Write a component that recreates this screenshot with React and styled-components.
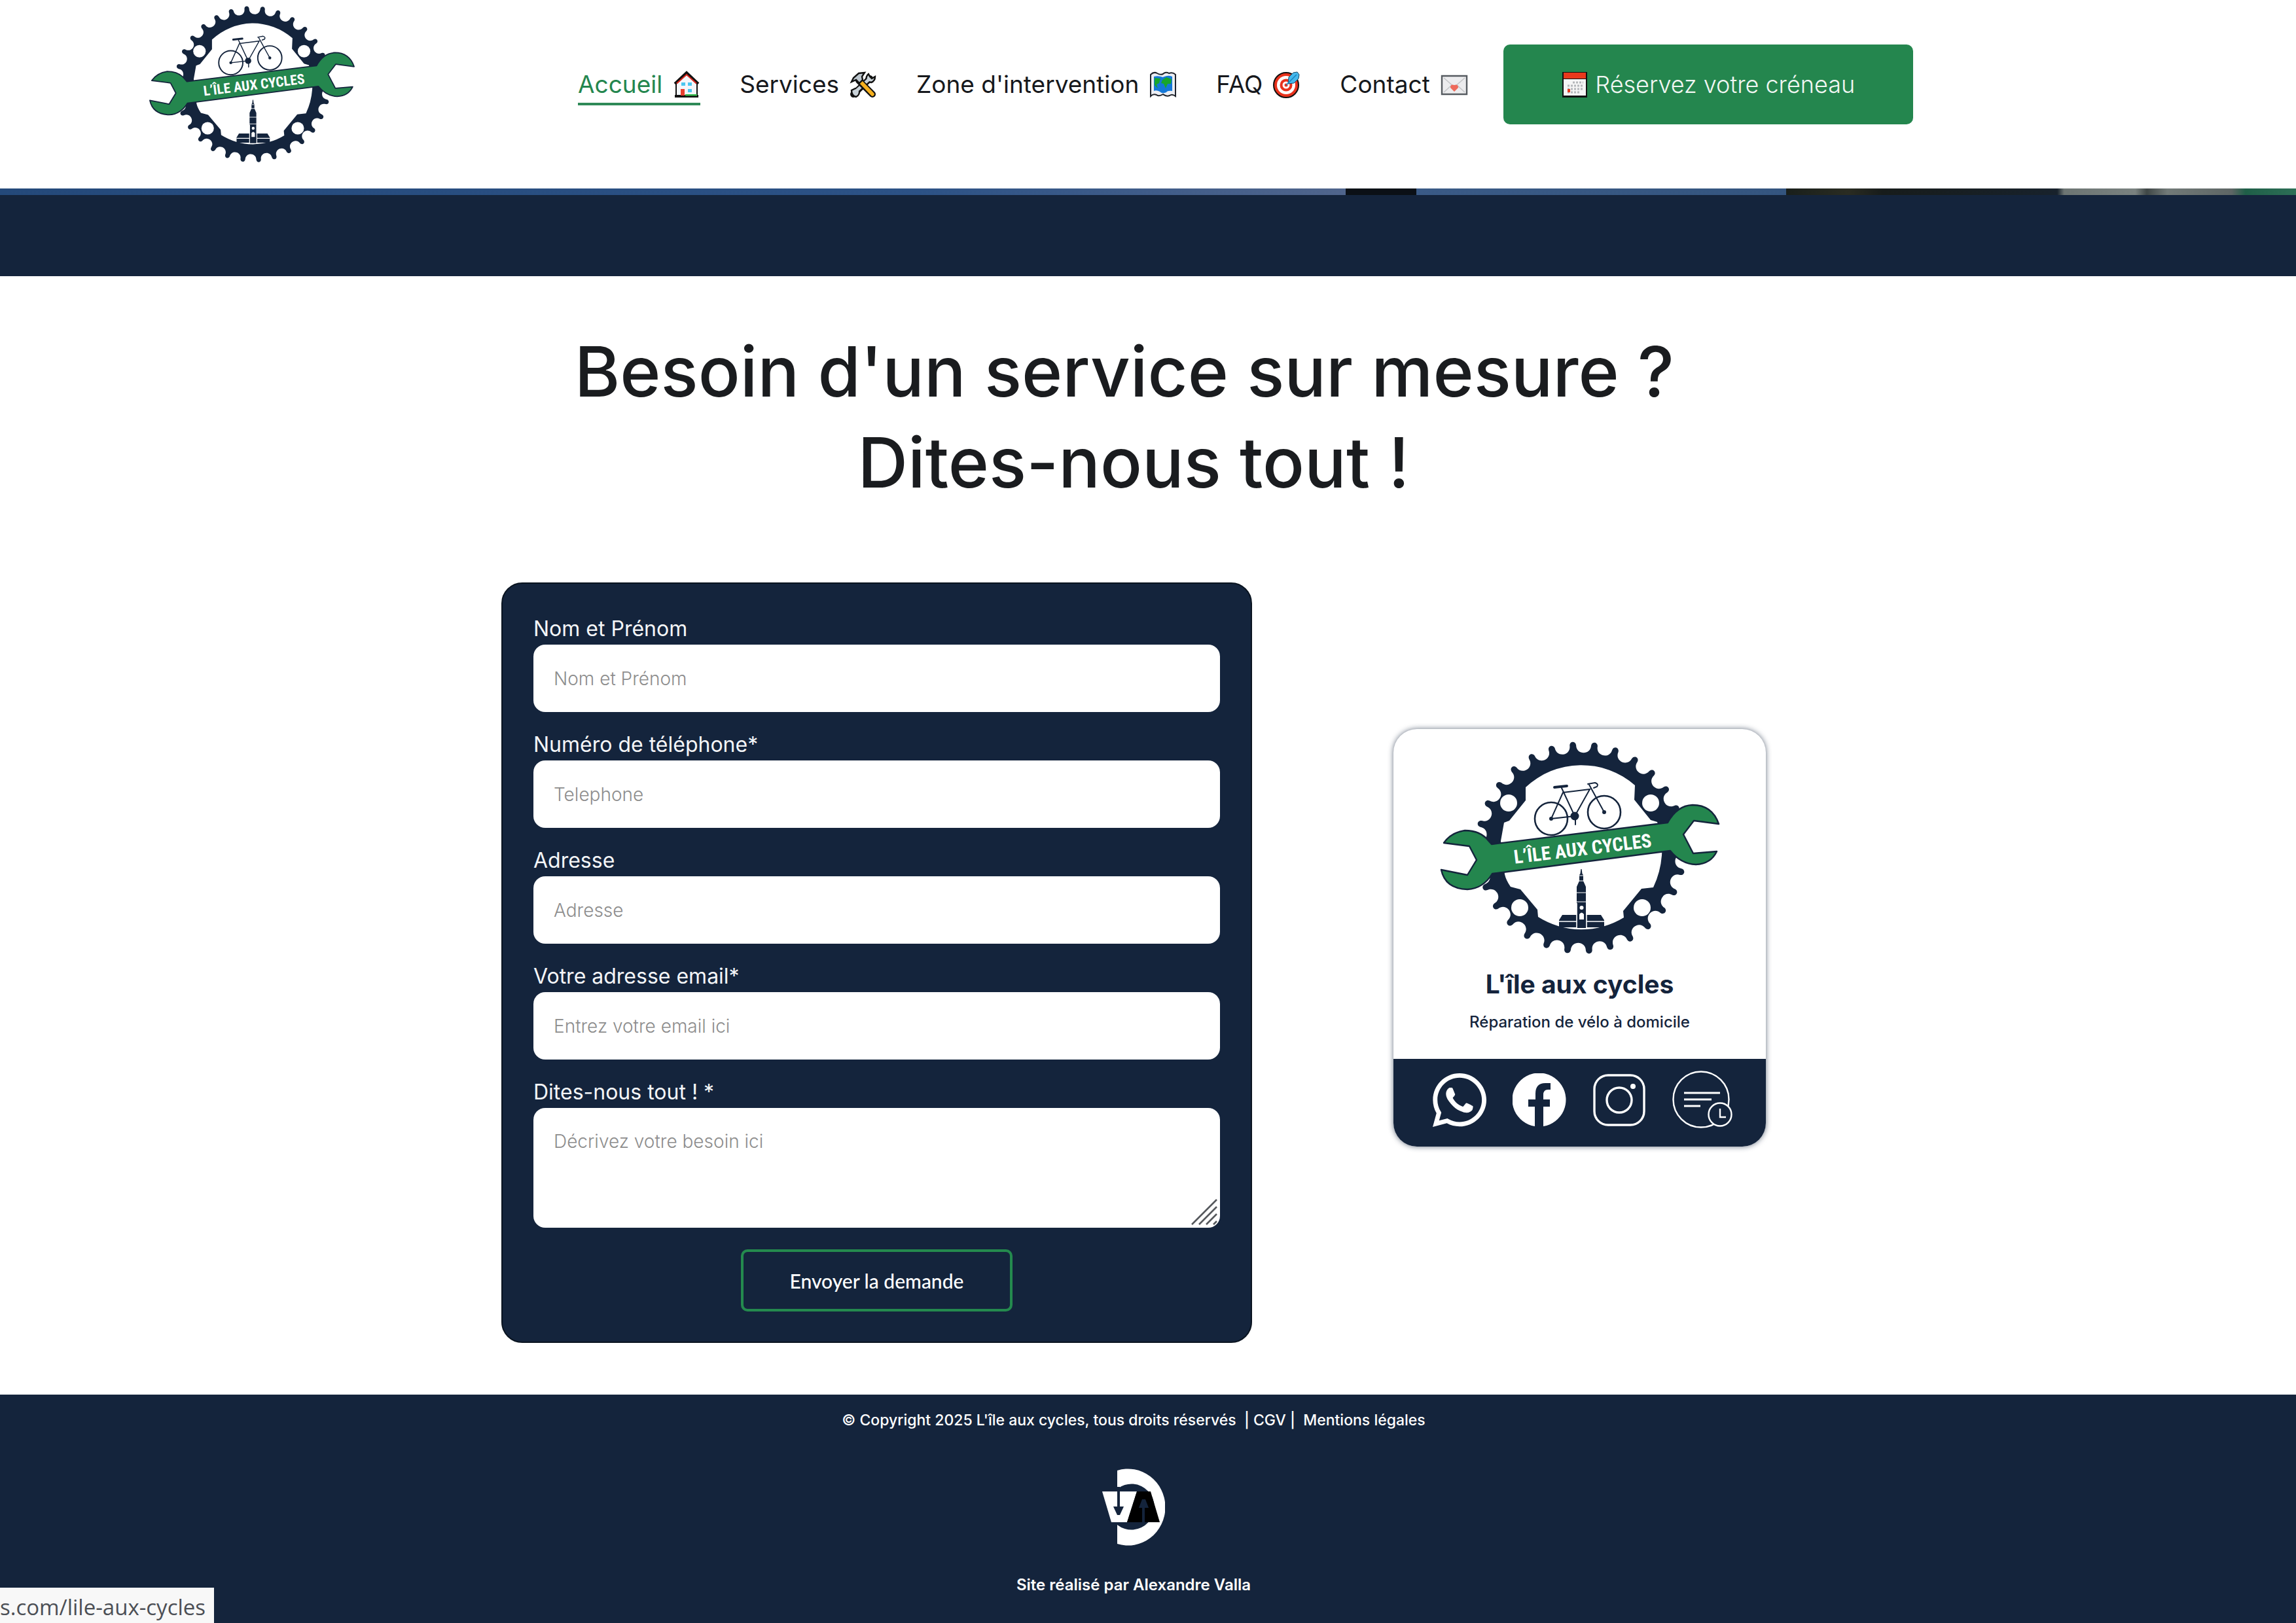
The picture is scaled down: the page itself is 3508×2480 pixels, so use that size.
import React from 'react';
import styled, { createGlobalStyle } from 'styled-components';
import { FaWhatsapp } from 'react-icons/fa';

const navy = '#14243c';
const green = '#24864e';

const GlobalStyle = createGlobalStyle`
  *, *::before, *::after { box-sizing: border-box; }
  body { margin: 0; background: #ffffff; font-family: Inter, "Open Sans", sans-serif; color: #1a1c1f; }
  h1, p { margin: 0; }
  a { color: inherit; text-decoration: none; }
`;

const Page = styled.div`
  min-height: 100vh;
  display: flex;
  flex-direction: column;
`;

const Header = styled.header`
  display: flex;
  align-items: center;
  padding: 9px 40px 39px 227px;
`;

const HomeLink = styled.a`
  display: block;
  margin-right: 340px;
  svg { display: block; width: 316px; height: 240px; }
`;

const Nav = styled.nav`
  display: flex;
  gap: 60px;
  margin-right: 54px;
`;

const NavLink = styled.a`
  display: inline-flex;
  align-items: center;
  gap: 16px;
  font-size: 37px;
  line-height: 56px;
  white-space: nowrap;
  color: ${(p) => (p.$active ? green : '#16181c')};
  border-top: 4px solid transparent;
  border-bottom: 4px solid ${(p) => (p.$active ? '#2f8a58' : 'transparent')};
`;

const Emoji = styled.svg`
  width: 42px;
  height: 42px;
  flex: none;
`;

const BookButton = styled.button`
  display: inline-flex;
  align-items: center;
  justify-content: center;
  gap: 10px;
  width: 626px;
  height: 122px;
  border: 0;
  border-radius: 10px;
  background: ${green};
  color: #f1f7f3;
  font: 300 36px/56px Inter, sans-serif;
  white-space: nowrap;
`;

const PhotoEdge = styled.div`
  height: 10px;
  background: linear-gradient(
    90deg,
    #24497a 0%, #2c5286 40%, #50658c 58.6%,
    #0b1016 58.6%, #0b1016 61.7%,
    #3a5a86 61.7%, #34557f 77.8%,
    #191f1b 77.8%, #2a2c22 80.5%, #171c1b 82%, #18222c 89.6%,
    #6d7573 89.9%, #7a8280 93%, #3f4746 93.5%, #727a78 94.4%, #5e6665 97.2%,
    #1f5f48 97.8%, #2d6f56 100%
  );
`;

const Band = styled.div`
  height: 124px;
  background: ${navy};
`;

const Main = styled.main`
  padding: 76px 44px 79px 0;
`;

const Title = styled.h1`
  font-size: 106px;
  line-height: 139px;
  font-weight: 500;
  text-align: center;
  span { display: block; }
`;

const Contact = styled.section`
  display: flex;
  justify-content: center;
  align-items: center;
  gap: 216px;
  margin-top: 114px;
`;

const Form = styled.form`
  display: flex;
  flex-direction: column;
  gap: 25px;
  width: 1147px;
  padding: 44px 47px 46px;
  border: 2px solid #0a1420;
  border-radius: 32px;
  background: ${navy};
`;

const Field = styled.div`
  display: flex;
  flex-direction: column;
  position: relative;
`;

const Label = styled.label`
  font-size: 32px;
  line-height: 49px;
  color: #f4f6f8;
`;

const Input = styled.input`
  height: 103px;
  padding: 0 31px;
  border: 0;
  border-radius: 18px;
  background: #ffffff;
  font: 300 28px/40px Inter, sans-serif;
  color: #222222;
  &::placeholder { color: #8d8d8d; opacity: 1; }
`;

const TextArea = styled.textarea`
  height: 183px;
  padding: 31px;
  border: 0;
  border-radius: 18px;
  background: #ffffff;
  font: 300 28px/40px Inter, sans-serif;
  color: #222222;
  resize: none;
  &::placeholder { color: #8d8d8d; opacity: 1; }
`;

const Grip = styled.svg`
  position: absolute;
  right: 3px;
  bottom: 3px;
  width: 42px;
  height: 42px;
`;

const Submit = styled.button`
  align-self: center;
  width: 415px;
  height: 95px;
  margin-top: 8px;
  border: 4px solid #248a4e;
  border-radius: 10px;
  background: transparent;
  color: #ffffff;
  font: 500 30px/40px Lato, sans-serif;
`;

const Card = styled.aside`
  width: 569px;
  margin-bottom: 76px;
  overflow: hidden;
  border-radius: 36px;
  background: #ffffff;
  color: ${navy};
  text-align: center;
  box-shadow: 0 0 8px rgba(20, 36, 60, 0.65);
`;

const CardBody = styled.div`
  padding: 19px 0 38px;
  svg { display: block; width: 428px; height: 326px; margin: 0 auto 22px; }
`;

const CardName = styled.p`
  font-size: 39px;
  line-height: 46px;
  font-weight: 700;
`;

const CardText = styled.p`
  margin-top: 17px;
  font-size: 24px;
  line-height: 36px;
  font-weight: 500;
`;

const Socials = styled.div`
  display: flex;
  justify-content: center;
  align-items: center;
  gap: 40px;
  height: 134px;
  padding: 0 0 8px 8px;
  background: ${navy};
  color: #ffffff;
  a { display: block; }
  svg { display: block; width: 82px; height: 82px; }
  a:last-child svg { width: 92px; height: 90px; }
`;

const Footer = styled.footer`
  flex: 1;
  display: flex;
  flex-direction: column;
  align-items: center;
  padding: 21px 44px 40px 0;
  background: ${navy};
  color: #ffffff;
  font-size: 24px;
  line-height: 36px;
  font-weight: 500;
`;

const Legal = styled.p`
  font-size: 23px;
  white-space: pre;
`;

const Maker = styled.a`
  display: block;
  margin: 56px 0 42px;
  svg { display: block; width: 96px; height: 118px; }
`;

const Credit = styled.p`
  font-weight: 600;
`;

const LinkHint = styled.div`
  position: fixed;
  left: 0;
  bottom: 0;
  padding: 6px 13px 0 0;
  background: #f8f8f8;
  color: #4c4f55;
  font: 33px/48px "Open Sans", "Noto Sans", sans-serif;
`;

function gearPath(cx, cy, teeth) {
  const pt = (deg, r) => {
    const a = ((deg - 90) * Math.PI) / 180;
    return `${(cx + r * Math.cos(a)).toFixed(1)} ${(cy + r * Math.sin(a)).toFixed(1)}`;
  };
  const step = 360 / teeth;
  let d = '';
  for (let i = 0; i < teeth; i += 1) {
    const a = -4.5 + i * step;
    d += `${i ? 'L' : 'M'}${pt(a - 1.8, 157)}`;
    d += `C${pt(a - 1.6, 164)} ${pt(a + 1.6, 164)} ${pt(a + 1.8, 157)}`;
    d += `C${pt(a + 1.6, 142)} ${pt(a + step - 1.6, 142)} ${pt(a + step - 1.8, 157)}`;
  }
  return `${d}Z`;
}

const hub =
  'M131 70A124 124 0 0 1 298 67L297 89L322 120L332 123A124 124 0 0 1 339 174Q337 200 326 223L308 225L280 259L281 269A124 124 0 0 1 150 268L149 257L123 226L108 222Q101 212 99 203L93 152L98 124L106 121L131 90Z';

const gear = gearPath(215.5, 162.5, 30);

function Logo() {
  return (
    <svg viewBox="0 0 428 326" role="img" aria-label="L'île aux cycles">
      <path d={`${gear}${hub}`} fill={navy} fillRule="evenodd" />
      <g fill="#fff">
        <circle cx="105" cy="94" r="13" />
        <circle cx="322" cy="94" r="13" />
        <circle cx="122" cy="254" r="13" />
        <circle cx="309" cy="254" r="13" />
      </g>
      <g fill="none" stroke={navy} strokeWidth="2.6" strokeLinecap="round">
        <circle cx="170" cy="118" r="25" />
        <circle cx="251" cy="108" r="25" />
        <g strokeWidth="2">
          <path d="M206 114L185 69M188 78L229 73L206 114L170 118L188 78M228 66L251 108M207 114V127" />
          <path d="M226 65L237 63Q243 65 240 69L235 71" />
        </g>
        <path d="M175 70L194 68" strokeWidth="4" />
      </g>
      <circle cx="206" cy="114" r="6.5" fill={navy} />
      <circle cx="170" cy="118" r="3" fill={navy} />
      <circle cx="251" cy="108" r="3" fill={navy} />
      <g fill={navy}>
        <path d="M215.4 195H216.6L217.5 202L219 204V213L223 222V285H209V222L213 213V204L214.5 202Z" />
        <path d="M187 265H246L251 273V284H182V273Z" />
      </g>
      <g stroke="#fff" strokeWidth="1.6">
        <path d="M182 275H209M224 275H251M209 247V286M224 247V286" />
        <path d="M208 231H225M208 245H225M212 213H220M213 205H219" strokeWidth="1.2" />
      </g>
      <circle cx="216.5" cy="254" r="3" fill="#fff" />
      <path d="M213 272V264Q216.5 259 220 264V272Z" fill="#fff" />
      <path
        d="M6 155Q17 139 38 136Q58 136 70 147L79 157L348 124Q362 98 386 97Q416 97 426 126L388 121L372 142L387 171L423 168Q414 187 391 188Q368 187 352 167L80 202Q66 225 42 226Q8 225 2 196L42 204L56 181L45 160Z"
        fill={green}
        stroke={navy}
        strokeWidth="2.4"
        strokeLinejoin="round"
      />
      <text
        x="218"
        y="174"
        transform="rotate(-7 218 163)"
        textAnchor="middle"
        fill="#fff"
        fontFamily='"Liberation Sans Narrow", "Roboto Condensed", "Liberation Sans", sans-serif'
        fontWeight="700"
        fontSize="29"
      >
        L’ÎLE AUX CYCLES
      </text>
    </svg>
  );
}

const House = () => (
  <Emoji viewBox="0 0 42 42" aria-hidden="true">
    <path d="M5 20L21 5L37 20V38H5Z" fill="#f4f6fa" stroke="#111" strokeWidth="2" />
    <path d="M3 37H39V41H3Z" fill="#111" />
    <path d="M19 36H37V38.5H19Z" fill="#35b84b" />
    <path d="M3 20L21 3L39 20" fill="none" stroke="#111" strokeWidth="4" />
    <path d="M6 19.5L21 6L36 19.5" fill="none" stroke="#e0281e" strokeWidth="2" />
    <path d="M12 28H18V38H12Z" fill="#e8402f" />
    <path d="M13 18H19V23H13ZM23 18H29V23H23ZM23 28H29V33H23Z" fill="#4cc6ef" />
  </Emoji>
);

const Tools = () => (
  <Emoji viewBox="0 0 42 42" aria-hidden="true">
    <path d="M6 36L31 12" stroke="#111" strokeWidth="10" strokeLinecap="round" />
    <path d="M29 5Q24 9 26 16L33 18Q39 16 39 9L34 12L31 9ZM3 30Q3 38 10 40Q16 37 15 30L9 27Z" fill="#c9d2d8" stroke="#111" strokeWidth="2.4" />
    <path d="M8 33L31 12" stroke="#c9d2d8" strokeWidth="5" />
    <path d="M14 15L35 36" stroke="#111" strokeWidth="10" strokeLinecap="round" />
    <path d="M16 16L35 36" stroke="#f6b01e" strokeWidth="5.5" strokeLinecap="round" />
    <path d="M3 17L6 11L14 4L23 3L19 9L20 14L15 19L10 14Z" fill="#bcc6cd" stroke="#111" strokeWidth="2.4" />
  </Emoji>
);

const WorldMap = () => (
  <Emoji viewBox="0 0 42 42" aria-hidden="true">
    <path d="M2 6Q7 1 12 4Q17 7 21 5Q25 1 30 4Q36 2 40 6V39Q35 35 31 38Q26 40 21 36Q15 40 11 37Q6 35 2 39Z" fill="#eceef3" stroke="#20242c" strokeWidth="2" />
    <path d="M7 9Q14 7 21 10Q28 6 35 9V31Q28 30 26 33Q20 36 16 32Q11 29 7 31Z" fill="#1478d8" />
    <path d="M8 11L17 12L15 19L11 21L13 27L8 22ZM20 14L26 10L34 13L33 20L28 20L25 27L22 20L18 19Z" fill="#18a62c" />
  </Emoji>
);

const Target = () => (
  <Emoji viewBox="0 0 42 42" aria-hidden="true">
    <circle cx="20" cy="22" r="19" fill="#e8321c" stroke="#111" strokeWidth="2" />
    <circle cx="20" cy="22" r="14" fill="#fff" />
    <circle cx="20" cy="22" r="9.5" fill="#e8321c" />
    <circle cx="20" cy="22" r="5.5" fill="#fff" />
    <circle cx="20" cy="22" r="2.5" fill="#e8321c" />
    <path d="M23 20L24 10L31 3L37 2L40 6L39 12L32 19Z" fill="#45b8ec" stroke="#174a66" strokeWidth="1" />
    <path d="M20 22L36 6" stroke="#1685c0" strokeWidth="1.6" />
  </Emoji>
);

const Envelope = () => (
  <Emoji viewBox="0 0 42 42" aria-hidden="true">
    <path d="M2 8H40V36H2Z" fill="#ececee" stroke="#565b60" strokeWidth="2.4" />
    <path d="M5 33L17 22M37 33L25 22M5 11L21 25L37 11" fill="none" stroke="#c4c6c8" strokeWidth="1.6" />
    <path d="M21 32L15 26Q15 20 21 22Q27 20 27 26Z" fill="#ee6a5b" />
  </Emoji>
);

const CalendarEmoji = () => (
  <Emoji viewBox="0 0 42 42" aria-hidden="true">
    <path d="M2 2H40V41H2Z" fill="#111" />
    <path d="M4 3H38V12H4Z" fill="#e8391c" />
    <path d="M4 13H38V38H4Z" fill="#f5f5f5" />
    <path d="M18 18H34M10 23H34M10 28H34M10 33H28" stroke="#b5b8bb" strokeWidth="3" strokeDasharray="3 2" />
    <path d="M10 28H14V33H10Z" fill="#e8391c" />
  </Emoji>
);

const links = [
  { text: 'Accueil', icon: House, active: true },
  { text: 'Services', icon: Tools },
  { text: "Zone d'intervention", icon: WorldMap },
  { text: 'FAQ', icon: Target },
  { text: 'Contact', icon: Envelope },
];

const fields = [
  { id: 'name', label: 'Nom et Prénom', hint: 'Nom et Prénom', type: 'text' },
  { id: 'phone', label: 'Numéro de téléphone*', hint: 'Telephone', type: 'tel' },
  { id: 'address', label: 'Adresse', hint: 'Adresse', type: 'text' },
  { id: 'email', label: 'Votre adresse email*', hint: 'Entrez votre email ici', type: 'email' },
];

export default function App() {
  return (
    <Page>
      <GlobalStyle />
      <Header>
        <HomeLink href="#accueil"><Logo /></HomeLink>
        <Nav>
          {links.map(({ text, icon: Icon, active }) => (
            <NavLink key={text} href={`#${text}`} $active={active}>
              {text}
              <Icon />
            </NavLink>
          ))}
        </Nav>
        <BookButton type="button">
          <CalendarEmoji />
          Réservez votre créneau
        </BookButton>
      </Header>
      <PhotoEdge />
      <Band />
      <Main>
        <Title>
          <span>Besoin d'un service sur mesure ?{'\u00a0'}</span>
          <span>Dites-nous tout !</span>
        </Title>
        <Contact>
          <Form onSubmit={(e) => e.preventDefault()}>
            {fields.map((f) => (
              <Field key={f.id}>
                <Label htmlFor={f.id}>{f.label}</Label>
                <Input id={f.id} type={f.type} placeholder={f.hint} />
              </Field>
            ))}
            <Field>
              <Label htmlFor="need">Dites-nous tout ! *</Label>
              <TextArea id="need" placeholder="Décrivez votre besoin ici" />
              <Grip viewBox="0 0 42 42" aria-hidden="true">
                <path d="M2 40L40 2M13 40L40 13M24 40L40 24M35 40L40 35" stroke="#55585c" strokeWidth="2.6" />
              </Grip>
            </Field>
            <Submit type="submit">Envoyer la demande</Submit>
          </Form>
          <Card>
            <CardBody>
              <Logo />
              <CardName>L'île aux cycles</CardName>
              <CardText>Réparation de vélo à domicile</CardText>
            </CardBody>
            <Socials>
              <a href="#whatsapp" aria-label="WhatsApp">
                <FaWhatsapp viewBox="0 32 448 448" />
              </a>
              <a href="#facebook" aria-label="Facebook">
                <svg viewBox="0 0 82 82">
                  <path d="M34 81A41 41 0 1 1 47 81V51H57V40H47V33Q47 25 54 25H58V15H52Q35 14 35 31V40H24V51H34Z" fill="#fff" />
                </svg>
              </a>
              <a href="#instagram" aria-label="Instagram">
                <svg viewBox="0 0 82 82" fill="none" stroke="#fff" strokeWidth="3.4">
                  <rect x="3" y="3" width="76" height="76" rx="21" />
                  <circle cx="41" cy="41" r="19" />
                  <circle cx="62" cy="20" r="4" fill="#fff" stroke="none" />
                </svg>
              </a>
              <a href="#rendez-vous" aria-label="Rendez-vous">
                <svg viewBox="0 0 92 90" fill="none" stroke="#fff" strokeWidth="2.4">
                  <circle cx="44" cy="44" r="42.5" />
                  <path d="M18 34H73M18 44H60M18 54H43" strokeWidth="3" />
                  <circle cx="73" cy="67" r="17.5" fill={navy} />
                  <path d="M73 58V71H82" />
                </svg>
              </a>
            </Socials>
          </Card>
        </Contact>
      </Main>
      <Footer>
        <Legal>
          © Copyright 2025 L'île aux cycles, tous droits réservés{'  '}| <a href="#cgv">CGV</a> |{'  '}
          <a href="#mentions">Mentions légales</a>
        </Legal>
        <Maker href="#alexandre-valla" aria-label="Alexandre Valla">
          <svg viewBox="0 0 96 118">
            <path d="M23 3A57 58.5 0 1 1 23 115V86A35 35 0 1 0 23 31Z" fill="#fff" />
            <path d="M0 35H53L38 82H14Z" fill="#fff" />
            <path d="M53 35H74L88 82H38Z" fill="#000" />
            <path d="M23 28H27V58H33L27 71H23L17 58H23Z" fill={navy} />
            <path d="M61 82V60H56L61 47H66L71 60H65V82Z" fill={navy} />
          </svg>
        </Maker>
        <Credit>Site réalisé par Alexandre Valla</Credit>
      </Footer>
      <LinkHint>s.com/lile-aux-cycles</LinkHint>
    </Page>
  );
}
